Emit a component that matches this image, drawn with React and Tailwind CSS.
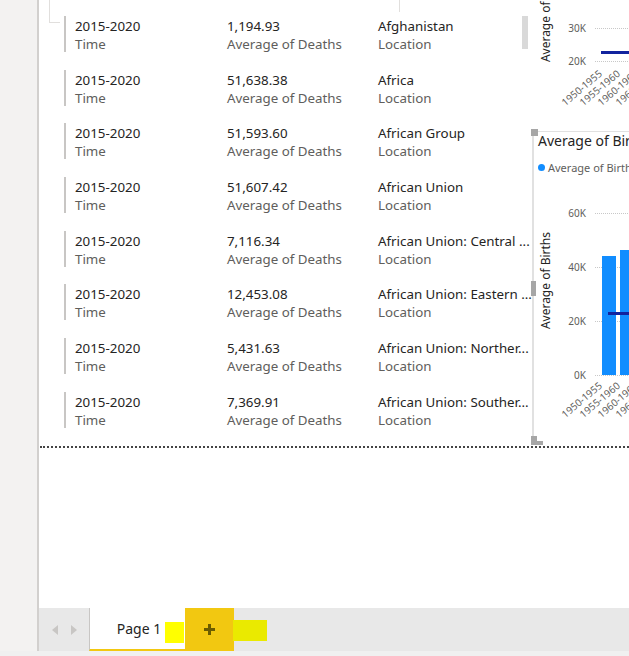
import React from "react";

const rows = [
  ["1,194.93", "Afghanistan"],
  ["51,638.38", "Africa"],
  ["51,593.60", "African Group"],
  ["51,607.42", "African Union"],
  ["7,116.34", "African Union: Central ..."],
  ["12,453.08", "African Union: Eastern ..."],
  ["5,431.63", "African Union: Norther..."],
  ["7,369.91", "African Union: Souther..."],
];

const xLabels = ["1950-1955", "1955-1960", "1960-1965", "1965-1970"];

function XAxisLabels({ className }) {
  return (
    <div className={"flex pl-[41px] " + className}>
      {xLabels.map((l) => (
        <div key={l} className="w-[18px] h-[10px] shrink-0 flex justify-end">
          <span className="shrink-0 whitespace-nowrap text-[10px] leading-[10px] text-[#605e5c] origin-top-right rotate-[-40deg]">
            {l}
          </span>
        </div>
      ))}
    </div>
  );
}

function VerticalTitle({ children }) {
  return (
    <span className="[writing-mode:vertical-rl] rotate-180 whitespace-nowrap text-[12px] leading-[16px] text-[#252423]">
      {children}
    </span>
  );
}

function Gridlines({ count, step }) {
  return (
    <div className="flex flex-col pt-[5px]">
      {Array.from({ length: count - 1 }).map((_, i) => (
        <div key={i} className="border-t border-dotted border-[#c8c8c8]" style={{ height: step }} />
      ))}
      <div className="border-t border-dotted border-[#c8c8c8]" />
    </div>
  );
}

export default function App() {
  return (
    <div
      className="w-[629px] h-[656px] flex flex-col bg-[#f0f0f0] overflow-hidden"
      style={{ fontFamily: '"Noto Sans", "Open Sans", sans-serif' }}
    >
      <div className="flex h-[651px]">
        <div className="w-[39px] bg-[#f3f2f1] border-r-2 border-[#d2d0ce] shrink-0" />
        <div className="flex-1 flex flex-col min-w-0">
          <div className="relative flex-1 bg-white overflow-hidden">
            {/* bracket lines at top */}
            <div className="absolute left-[10px] top-0 w-[11px] h-[23px] border-l border-b border-[#e1dfdd]" />
            <div className="absolute left-[360px] top-0 w-px h-[12px] bg-[#e1dfdd]" />

            {/* table visual */}
            <div className="relative pt-[16px] pl-[25px] flex flex-col">
              <div className="absolute left-[483px] top-[16px] w-[6px] h-[33px] bg-[#d9d9d9]" />
              {rows.map(([v, loc], i) => (
                <div key={i} className="flex h-[53.7px] shrink-0">
                  <div className="w-[2px] h-[36px] bg-[#c8c6c4] shrink-0" />
                  <div className="ml-[9px] w-[152px] shrink-0 pt-[1px] text-[13.33px] leading-[18px]">
                    <div className="text-[#252423]">2015-2020</div>
                    <div className="text-[#605e5c]">Time</div>
                  </div>
                  <div className="w-[151px] shrink-0 pt-[1px] text-[13.33px] leading-[18px]">
                    <div className="text-[#252423]">{v}</div>
                    <div className="text-[#605e5c]">Average of Deaths</div>
                  </div>
                  <div className="shrink-0 pt-[1px] text-[13.33px] leading-[18px] whitespace-nowrap">
                    <div className="text-[#252423]">{loc}</div>
                    <div className="text-[#605e5c]">Location</div>
                  </div>
                </div>
              ))}
            </div>

            {/* dotted divider */}
            <div className="absolute left-[1px] right-0 top-[446px] border-t-2 border-dotted border-[#444]" />

            {/* top chart (partially visible) */}
            <div className="absolute left-[493px] top-[23px] w-[200px] pl-[6px] flex flex-col">
              <div className="flex items-start">
                <div className="w-[16px] h-[39px] flex flex-col justify-end items-center">
                  <VerticalTitle>Average of Births</VerticalTitle>
                </div>
                <div className="w-[32px] flex flex-col items-end gap-[23px] text-[10px] leading-[10px] text-[#605e5c]">
                  <span>30K</span>
                  <span>20K</span>
                </div>
                <div className="relative flex-1 ml-[9px]">
                  <Gridlines count={2} step={33} />
                  <div className="absolute left-[6px] right-0 top-[28px] h-[3px] bg-[#12239e]" />
                </div>
              </div>
              <XAxisLabels className="mt-[2px]" />
            </div>

            {/* bottom chart */}
            <div className="absolute left-[493px] top-[131px] w-[200px] h-[314px] border-l-2 border-t border-[#e1e1e1] pl-[4px] flex flex-col">
              <div className="text-[14px] leading-[18px] text-[#252423] whitespace-nowrap">Average of Births</div>
              <div className="mt-[10px] h-[14px] flex items-center gap-[3px] whitespace-nowrap">
                <span className="w-[7px] h-[7px] rounded-full bg-[#118dff] shrink-0" />
                <span className="text-[11px] leading-none text-[#605e5c]">Average of Births</span>
              </div>
              <div className="mt-[34px] flex items-start">
                <div className="w-[16px] pt-[24px] flex justify-center items-start">
                  <VerticalTitle>Average of Births</VerticalTitle>
                </div>
                <div className="w-[32px] flex flex-col items-end gap-[44px] text-[10px] leading-[10px] text-[#605e5c]">
                  <span>60K</span>
                  <span>40K</span>
                  <span>20K</span>
                  <span>0K</span>
                </div>
                <div className="relative flex-1 ml-[9px]">
                  <Gridlines count={4} step={54} />
                  <div className="absolute left-[7px] bottom-[1px] flex items-end gap-[4px]">
                    <div className="w-[14px] h-[119px] bg-[#118dff]" />
                    <div className="w-[14px] h-[125px] bg-[#118dff]" />
                  </div>
                  <div className="absolute left-[13px] right-0 top-[104px] h-[3px] bg-[#12239e]" />
                </div>
              </div>
              <XAxisLabels className="mt-0" />
            </div>

            {/* resize handles of the selected visual */}
            <div className="absolute left-[492px] top-[129px] w-[7px] h-[7px] bg-[#a6a6a6]" />
            <div className="absolute left-[492px] top-[281px] w-[5px] h-[15px] bg-[#a6a6a6]" />
            <div className="absolute left-[492px] top-[436px] w-[6px] h-[9px] bg-[#a6a6a6]" />
            <div className="absolute left-[492px] top-[441px] w-[12px] h-[4px] bg-[#a6a6a6]" />
          </div>

          {/* page tab bar */}
          <div className="h-[43px] bg-[#e8e8e8] flex items-stretch relative">
            <div className="w-[50px] flex items-center justify-around px-[6px]">
              <svg width="6" height="10" viewBox="0 0 6 10"><path d="M6 0 L0 5 L6 10 Z" fill="#c8c6c4" /></svg>
              <svg width="6" height="10" viewBox="0 0 6 10"><path d="M0 0 L6 5 L0 10 Z" fill="#c8c6c4" /></svg>
            </div>
            <div className="w-[96px] bg-white border-l border-[#c8c6c4] border-b-2 border-b-[#f2c811] flex items-center justify-center pl-[3px] text-[14px] text-[#252423]">
              Page 1
            </div>
            <div className="w-[49px] bg-[#f2c811] flex items-center justify-center">
              <svg width="13" height="13" viewBox="0 0 13 13">
                <path d="M6.5 1 V12 M1 6.5 H12" stroke="#6b5d00" strokeWidth="3" />
              </svg>
            </div>
            <div className="absolute left-[126px] top-[14px] w-[19px] h-[21px] bg-[#ffff00]" />
            <div className="absolute left-[194px] top-[12px] w-[34px] h-[21px] bg-[#eaea00]" />
          </div>
        </div>
      </div>
    </div>
  );
}
